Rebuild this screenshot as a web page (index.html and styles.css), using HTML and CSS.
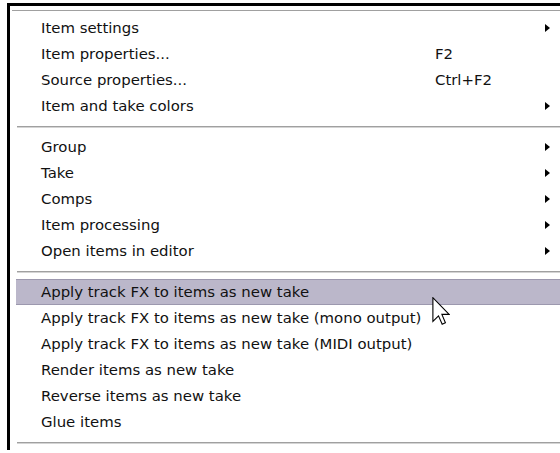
FILE: index.html
```html
<!DOCTYPE html>
<html>
<head>
<meta charset="utf-8">
<link rel="stylesheet" href="styles.css">
</head>
<body>
<div class="frame">
  <div class="menu">
    <div class="item"><span class="label">Item settings</span><span class="key"></span><span class="arrow"></span></div>
    <div class="item"><span class="label">Item properties...</span><span class="key">F2</span></div>
    <div class="item"><span class="label">Source properties...</span><span class="key">Ctrl+F2</span></div>
    <div class="item"><span class="label">Item and take colors</span><span class="key"></span><span class="arrow"></span></div>
    <div class="sep"></div>
    <div class="item"><span class="label">Group</span><span class="key"></span><span class="arrow"></span></div>
    <div class="item"><span class="label">Take</span><span class="key"></span><span class="arrow"></span></div>
    <div class="item"><span class="label">Comps</span><span class="key"></span><span class="arrow"></span></div>
    <div class="item"><span class="label">Item processing</span><span class="key"></span><span class="arrow"></span></div>
    <div class="item"><span class="label">Open items in editor</span><span class="key"></span><span class="arrow"></span></div>
    <div class="sep"></div>
    <div class="item active"><span class="label">Apply track FX to items as new take</span></div>
    <div class="item"><span class="label">Apply track FX to items as new take (mono output)</span></div>
    <div class="item"><span class="label">Apply track FX to items as new take (MIDI output)</span></div>
    <div class="item"><span class="label">Render items as new take</span></div>
    <div class="item"><span class="label">Reverse items as new take</span></div>
    <div class="item"><span class="label">Glue items</span></div>
    <div class="sep"></div>
  </div>
</div>
<svg class="cursor" width="18" height="28" viewBox="0 0 12 19">
  <path d="M0.5 0.5 L0.5 16.5 L4.3 12.8 L6.8 18.5 L9 17.5 L6.6 11.8 L11.5 11.8 Z" fill="#fff" stroke="#000" stroke-width="0.75" stroke-linejoin="miter"/>
</svg>
</body>
</html>
```
FILE: styles.css
```css
html, body {
  margin: 0;
  padding: 0;
  background: #fff;
  overflow: hidden;
}
body {
  width: 560px;
  height: 453px;
  position: relative;
  font-family: "DejaVu Sans", sans-serif;
  font-size: 14.9px;
  color: #111;
}
.frame {
  margin: 3px 0 0 7px;
  border-top: 3px solid #000;
  border-left: 3px solid #000;
  height: 447px;
  box-sizing: border-box;
  padding: 4px 0 0 2px;
  overflow: hidden;
}
.menu {
  border-top: 1px solid #a0a0a0;
  padding: 4px 0 0 4px;
}
.item {
  height: 26px;
  display: grid;
  grid-template-columns: 394px 110px 5px;
  align-items: center;
  padding-left: 25px;
  box-sizing: border-box;
  white-space: nowrap;
}
.item.active {
  background: #bbb7ca;
  border-top: 1px solid #9c98ae;
  border-bottom: 1px solid #9c98ae;
}
.arrow {
  width: 0;
  height: 0;
  border-top: 4px solid transparent;
  border-bottom: 4px solid transparent;
  border-left: 5px solid #000;
}
.sep {
  height: 15px;
  margin-left: 1px;
  display: flex;
  align-items: center;
}
.sep::before {
  content: "";
  display: block;
  width: 100%;
  height: 1px;
  background: #a0a0a0;
  border-bottom: 1px solid #d4d4d4;
}
.cursor {
  position: absolute;
  left: 432px;
  top: 297px;
}
```
